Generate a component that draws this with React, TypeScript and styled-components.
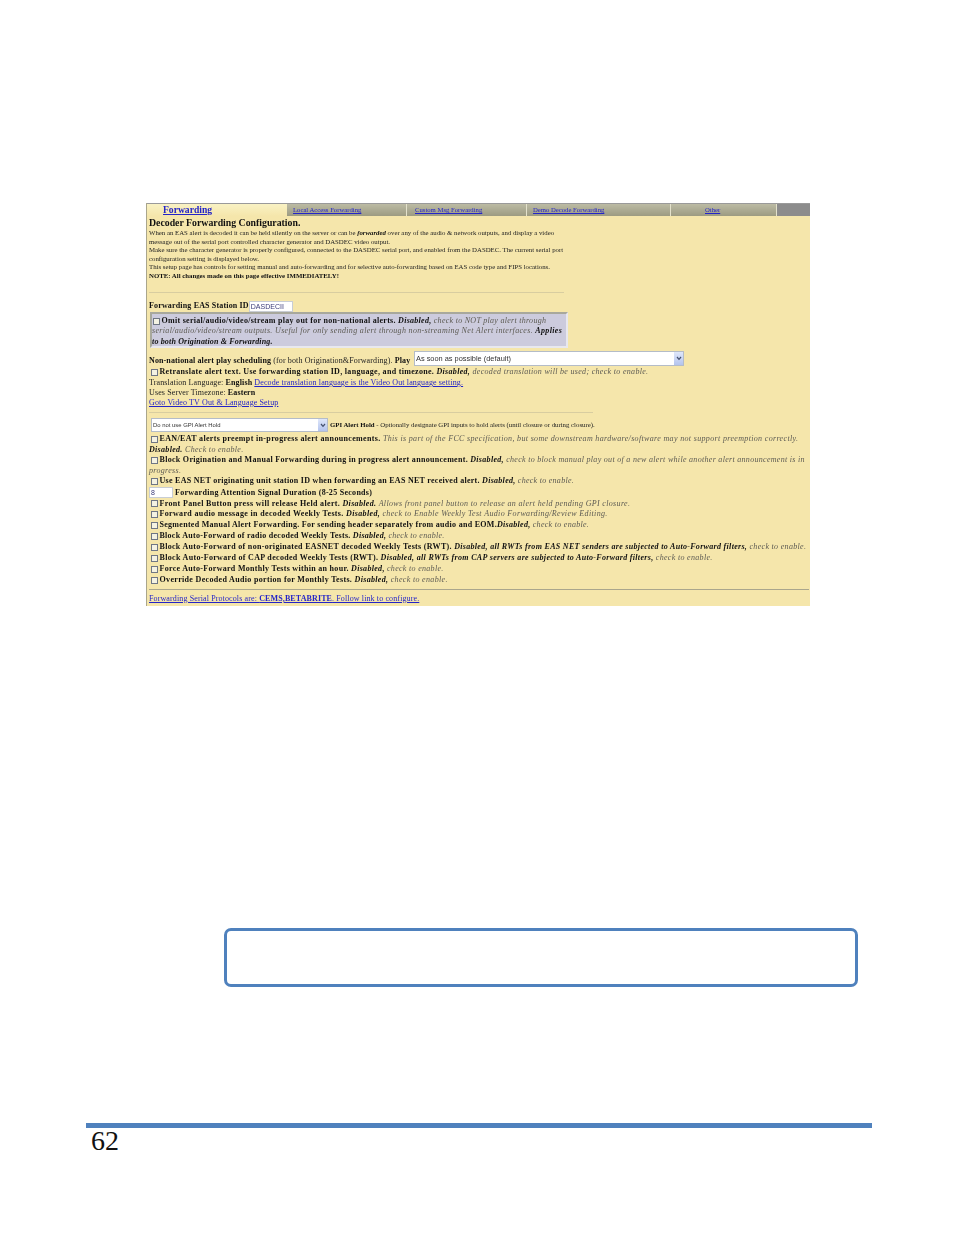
import React from "react";
import styled, { createGlobalStyle } from "styled-components";

const GlobalStyle = createGlobalStyle`
  html, body {
    margin: 0;
    padding: 0;
    background: #fff;
  }
`;

const Page = styled.div`
  width: 954px;
  height: 1235px;
  padding-top: 203px;
  box-sizing: border-box;
  overflow: hidden;
  display: flex;
  flex-direction: column;
  font-family: "Liberation Serif", serif;
`;

const Panel = styled.div`
  width: 664px;
  height: 403px;
  margin-left: 146px;
  box-sizing: border-box;
  background: #f5e6ab;
  border-left: 1px solid #aaa68c;
  color: #222;
  filter: blur(0.35px);
`;

const Tabs = styled.div`
  display: flex;
  height: 13px;
  background: #8c8c8c;
  border-top: 1px solid #9a9a9a;
  box-sizing: border-box;
`;

const Tab = styled.a<{ $w: number; $pad: number; $active?: boolean }>`
  width: ${(p) => p.$w}px;
  box-sizing: border-box;
  display: flex;
  align-items: center;
  padding: 0 0 1px ${(p) => p.$pad}px;
  border-right: ${(p) => (p.$active ? "none" : "1px solid #e4e2cc")};
  font-size: ${(p) => (p.$active ? 9.6 : 6.7)}px;
  font-weight: ${(p) => (p.$active ? 700 : 400)};
  color: #2424c8;
  text-decoration: underline;
  background: ${(p) =>
    p.$active
      ? "linear-gradient(#f9f2c4, #f5e6ab)"
      : "linear-gradient(#bcbba4, #9c9b82)"};
`;

const Body = styled.div`
  padding-left: 2px;
`;

const Line = styled.div<{ $h: number; $size?: number; $wide?: number; $indent?: number }>`
  height: ${(p) => p.$h}px;
  line-height: ${(p) => p.$h}px;
  font-size: ${(p) => p.$size ?? 8}px;
  letter-spacing: ${(p) => p.$wide ?? 0.31}px;
  padding-left: ${(p) => p.$indent ?? 0}px;
  white-space: nowrap;
  display: flex;
  align-items: center;
`;

const Text = styled.span`
  white-space: pre;
`;

const Title = styled(Line)`
  font-weight: 700;
  color: #111;
`;

const Rule = styled.hr<{ $w: number; $top: number; $bottom: number; $dark?: boolean }>`
  width: ${(p) => p.$w}px;
  height: 1px;
  border: none;
  margin: ${(p) => p.$top}px 0 ${(p) => p.$bottom}px 0;
  background: ${(p) => (p.$dark ? "#aaa68c" : "#d8cda0")};
`;

const Strong = styled.b`
  color: #111;
  white-space: pre;
`;

const Note = styled.i`
  color: #5c5a52;
  white-space: pre;
`;

const Flag = styled.i`
  color: #111;
  font-weight: 700;
  white-space: pre;
`;

const Link = styled.a`
  color: #2424c8;
  text-decoration: underline;
  white-space: pre;
`;

const Check = styled.input.attrs({ type: "checkbox", readOnly: true })`
  appearance: none;
  width: 7px;
  height: 7px;
  margin: 0 1.5px 0 0;
  flex: none;
  background: #f4f2e2;
  border: 1px solid #6f7684;
  box-sizing: border-box;
`;

const Field = styled.input.attrs({ readOnly: true })<{ $w: number }>`
  width: ${(p) => p.$w}px;
  height: 11px;
  box-sizing: border-box;
  margin: 0 2px 0 0;
  padding: 0 1px;
  background: #fff;
  border: 1px solid #c8cdd4;
  outline: none;
  font-family: "Liberation Sans", sans-serif;
  font-size: 7px;
  letter-spacing: 0;
  color: #3a3a78;
`;

const Callout = styled.div`
  width: 418px;
  height: 36px;
  margin: 0 0 2px 1px;
  box-sizing: border-box;
  background: #cccbdd;
  border: 2px solid;
  border-color: #a8a89c #e8e8ee #e8e8ee #a8a89c;
  padding-top: 2px;
`;

const SelectBox = styled.div<{ $w: number; $h: number; $size: number }>`
  width: ${(p) => p.$w}px;
  height: ${(p) => p.$h}px;
  box-sizing: border-box;
  flex: none;
  display: flex;
  align-items: center;
  justify-content: space-between;
  background: #fff;
  border: 1px solid #b4bcc8;
  font-family: "Liberation Sans", sans-serif;
  font-size: ${(p) => p.$size}px;
  letter-spacing: 0;
  color: #333;
  padding-left: 1px;
`;

const SelectArrow = styled.span`
  width: 9px;
  height: 100%;
  display: flex;
  align-items: center;
  justify-content: center;
  background: linear-gradient(#dfe7fa, #b4c4ee);
`;

const Chevron = () => (
  <svg width="6" height="5" viewBox="0 0 6 5">
    <path d="M1 1 L3 3.4 L5 1" fill="none" stroke="#44506e" strokeWidth="1.2" />
  </svg>
);

const Select: React.FC<{ w: number; h: number; size: number; label: string }> = ({ w, h, size, label }) => (
  <SelectBox $w={w} $h={h} $size={size}>
    <span>{label}</span>
    <SelectArrow>
      <Chevron />
    </SelectArrow>
  </SelectBox>
);

const ScheduleRow = styled(Line)`
  align-items: flex-end;
`;

const ScheduleLabel = styled.span`
  width: 265px;
  flex: none;
  line-height: 11px;
  white-space: pre;
`;

const GpiRow = styled(Line)`
  margin: 5px 0 2px;
  padding-left: 2px;
`;

const GpiHelp = styled.span`
  margin-left: 2px;
  font-size: 6.8px;
  letter-spacing: 0;
  white-space: pre;
`;

const Outlined = styled.div`
  width: 634px;
  height: 59px;
  margin: 322px 0 0 224px;
  box-sizing: border-box;
  border: 3px solid #4f81bd;
  border-radius: 7px;
  background: #fff;
`;

const FooterRule = styled.div`
  width: 786px;
  height: 5px;
  margin: 136px 0 0 86px;
  background: #4f81bd;
`;

const PageNumber = styled.div`
  margin-left: 91px;
  font-size: 28px;
  line-height: 26px;
  color: #111;
`;

const ALERT_ROWS: { id: string; wide: number; bold: string; flag: string; note: string }[] = [
  { id: "front", wide: 0.34, bold: "Front Panel Button press will release Held alert. ", flag: "Disabled.", note: " Allows front panel button to release an alert held pending GPI closure." },
  { id: "audio", wide: 0.35, bold: "Forward audio message in decoded Weekly Tests. ", flag: "Disabled,", note: " check to Enable Weekly Test Audio Forwarding/Review Editing." },
  { id: "segmented", wide: 0.29, bold: "Segmented Manual Alert Forwarding. For sending header separately from audio and EOM.", flag: "Disabled,", note: " check to enable." },
  { id: "radio", wide: 0.27, bold: "Block Auto-Forward of radio decoded Weekly Tests. ", flag: "Disabled,", note: " check to enable." },
  { id: "easnet", wide: 0.31, bold: "Block Auto-Forward of non-originated EASNET decoded Weekly Tests (RWT). ", flag: "Disabled, all RWTs from EAS NET senders are subjected to Auto-Forward filters,", note: " check to enable." },
  { id: "cap", wide: 0.32, bold: "Block Auto-Forward of CAP decoded Weekly Tests (RWT). ", flag: "Disabled, all RWTs from CAP servers are subjected to Auto-Forward filters,", note: " check to enable." },
  { id: "monthly", wide: 0.3, bold: "Force Auto-Forward Monthly Tests within an hour. ", flag: "Disabled,", note: " check to enable." },
  { id: "override", wide: 0.33, bold: "Override Decoded Audio portion for Monthly Tests. ", flag: "Disabled,", note: " check to enable." },
];

export default function App() {
  return (
    <>
      <GlobalStyle />
      <Page>
        <Panel>
          <Tabs>
            <Tab $w={140} $pad={16} $active>Forwarding</Tab>
            <Tab $w={120} $pad={6}>Local Access Forwarding</Tab>
            <Tab $w={120} $pad={8}>Custom Msg Forwarding</Tab>
            <Tab $w={144} $pad={6}>Demo Decode Forwarding</Tab>
            <Tab $w={106} $pad={34}>Other</Tab>
          </Tabs>
          <Body>
            <Title $h={13} $size={9.8} $wide={0}>Decoder Forwarding Configuration.</Title>
            <Line $h={8.5} $size={6.8} $wide={0}><Text>When an EAS alert is decoded it can be held silently on the server or can be <Flag>forwarded</Flag> over any of the audio &amp; network outputs, and display a video</Text></Line>
            <Line $h={8.5} $size={6.8} $wide={0}><Text>message out of the serial port controlled character generator and DASDEC video output.</Text></Line>
            <Line $h={8.5} $size={6.8} $wide={0}><Text>Make sure the character generator is properly configured, connected to the DASDEC serial port, and enabled from the DASDEC. The current serial port</Text></Line>
            <Line $h={8.5} $size={6.8} $wide={0}><Text>configuration setting is displayed below.</Text></Line>
            <Line $h={8.5} $size={6.8} $wide={0}><Text>This setup page has controls for setting manual and auto-forwarding and for selective auto-forwarding based on EAS code type and FIPS locations.</Text></Line>
            <Line $h={8.5} $size={6.8} $wide={0}><Strong>NOTE: All changes made on this page effective IMMEDIATELY!</Strong></Line>
            <Rule $w={415} $top={12} $bottom={7} />
            <Line $h={12} $wide={0.16}>
              <Strong>Forwarding EAS Station ID</Strong>
              <Field $w={44} value="DASDECII" />
            </Line>
            <Callout>
              <Line $h={10.3} $indent={1} $wide={0.28}>
                <Check />
                <Strong>Omit serial/audio/video/stream play out for non-national alerts. </Strong>
                <Flag>Disabled,</Flag>
                <Note> check to NOT play alert through</Note>
              </Line>
              <Line $h={10.3} $wide={0.33}>
                <Note>serial/audio/video/stream outputs. Useful for only sending alert through non-streaming Net Alert interfaces. </Note>
                <Flag>Applies</Flag>
              </Line>
              <Line $h={10.3} $wide={0.16}>
                <Flag>to both Origination &amp; Forwarding.</Flag>
              </Line>
            </Callout>
            <ScheduleRow $h={16} $wide={0.12}>
              <ScheduleLabel>
                <Strong>Non-national alert play scheduling</Strong> (for both Origination&amp;Forwarding). <Strong>Play</Strong>
              </ScheduleLabel>
              <Select w={270} h={15} size={7.4} label="As soon as possible (default)" />
            </ScheduleRow>
            <Line $h={12} $indent={2}>
              <Check />
              <Strong>Retranslate alert text. Use forwarding station ID, language, and timezone. </Strong>
              <Flag>Disabled,</Flag>
              <Note> decoded translation will be used; check to enable.</Note>
            </Line>
            <Line $h={10} $wide={0.12}>
              <Text>Translation Language: <Strong>English </Strong></Text>
              <Link>Decode translation language is the Video Out language setting.</Link>
            </Line>
            <Line $h={10} $wide={0.12}>
              <Text>Uses Server Timezone: <Strong>Eastern</Strong></Text>
            </Line>
            <Line $h={10} $wide={0.12}><Link>Goto Video TV Out &amp; Language Setup</Link></Line>
            <Rule $w={444} $top={4} $bottom={5} />
            <GpiRow $h={14} $size={6.8}>
              <Select w={177} h={14} size={5.9} label="Do not use GPI Alert Hold" />
              <GpiHelp><Strong>GPI Alert Hold</Strong> - Optionally designate GPI inputs to hold alerts (until closure or during closure).</GpiHelp>
            </GpiRow>
            <Line $h={10.5} $indent={2} $wide={0.34}>
              <Check />
              <Strong>EAN/EAT alerts preempt in-progress alert announcements. </Strong>
              <Note>This is part of the FCC specification, but some downstream hardware/software may not support preemption correctly.</Note>
            </Line>
            <Line $h={10.5}>
              <Flag>Disabled.</Flag>
              <Note> Check to enable.</Note>
            </Line>
            <Line $h={10.5} $indent={2} $wide={0.3}>
              <Check />
              <Strong>Block Origination and Manual Forwarding during in progress alert announcement. </Strong>
              <Flag>Disabled,</Flag>
              <Note> check to block manual play out of a new alert while another alert announcement is in</Note>
            </Line>
            <Line $h={10.5}><Note>progress.</Note></Line>
            <Line $h={10.5} $indent={2} $wide={0.28}>
              <Check />
              <Strong>Use EAS NET originating unit station ID when forwarding an EAS NET received alert. </Strong>
              <Flag>Disabled,</Flag>
              <Note> check to enable.</Note>
            </Line>
            <Line $h={12} $wide={0.28}>
              <Field $w={24} value="8" />
              <Strong>Forwarding Attention Signal Duration (8-25 Seconds)</Strong>
            </Line>
            {ALERT_ROWS.map((row) => (
              <Line key={row.id} $h={10.9} $indent={2} $wide={row.wide}>
                <Check />
                <Strong>{row.bold}</Strong>
                <Flag>{row.flag}</Flag>
                <Note>{row.note}</Note>
              </Line>
            ))}
            <Rule $w={660} $top={3} $bottom={4} $dark />
            <Line $h={10} $wide={0.12}>
              <Link>Forwarding Serial Protocols are: <b>CEMS,BETABRITE</b>. Follow link to configure.</Link>
            </Line>
          </Body>
        </Panel>
        <Outlined />
        <FooterRule />
        <PageNumber>62</PageNumber>
      </Page>
    </>
  );
}
